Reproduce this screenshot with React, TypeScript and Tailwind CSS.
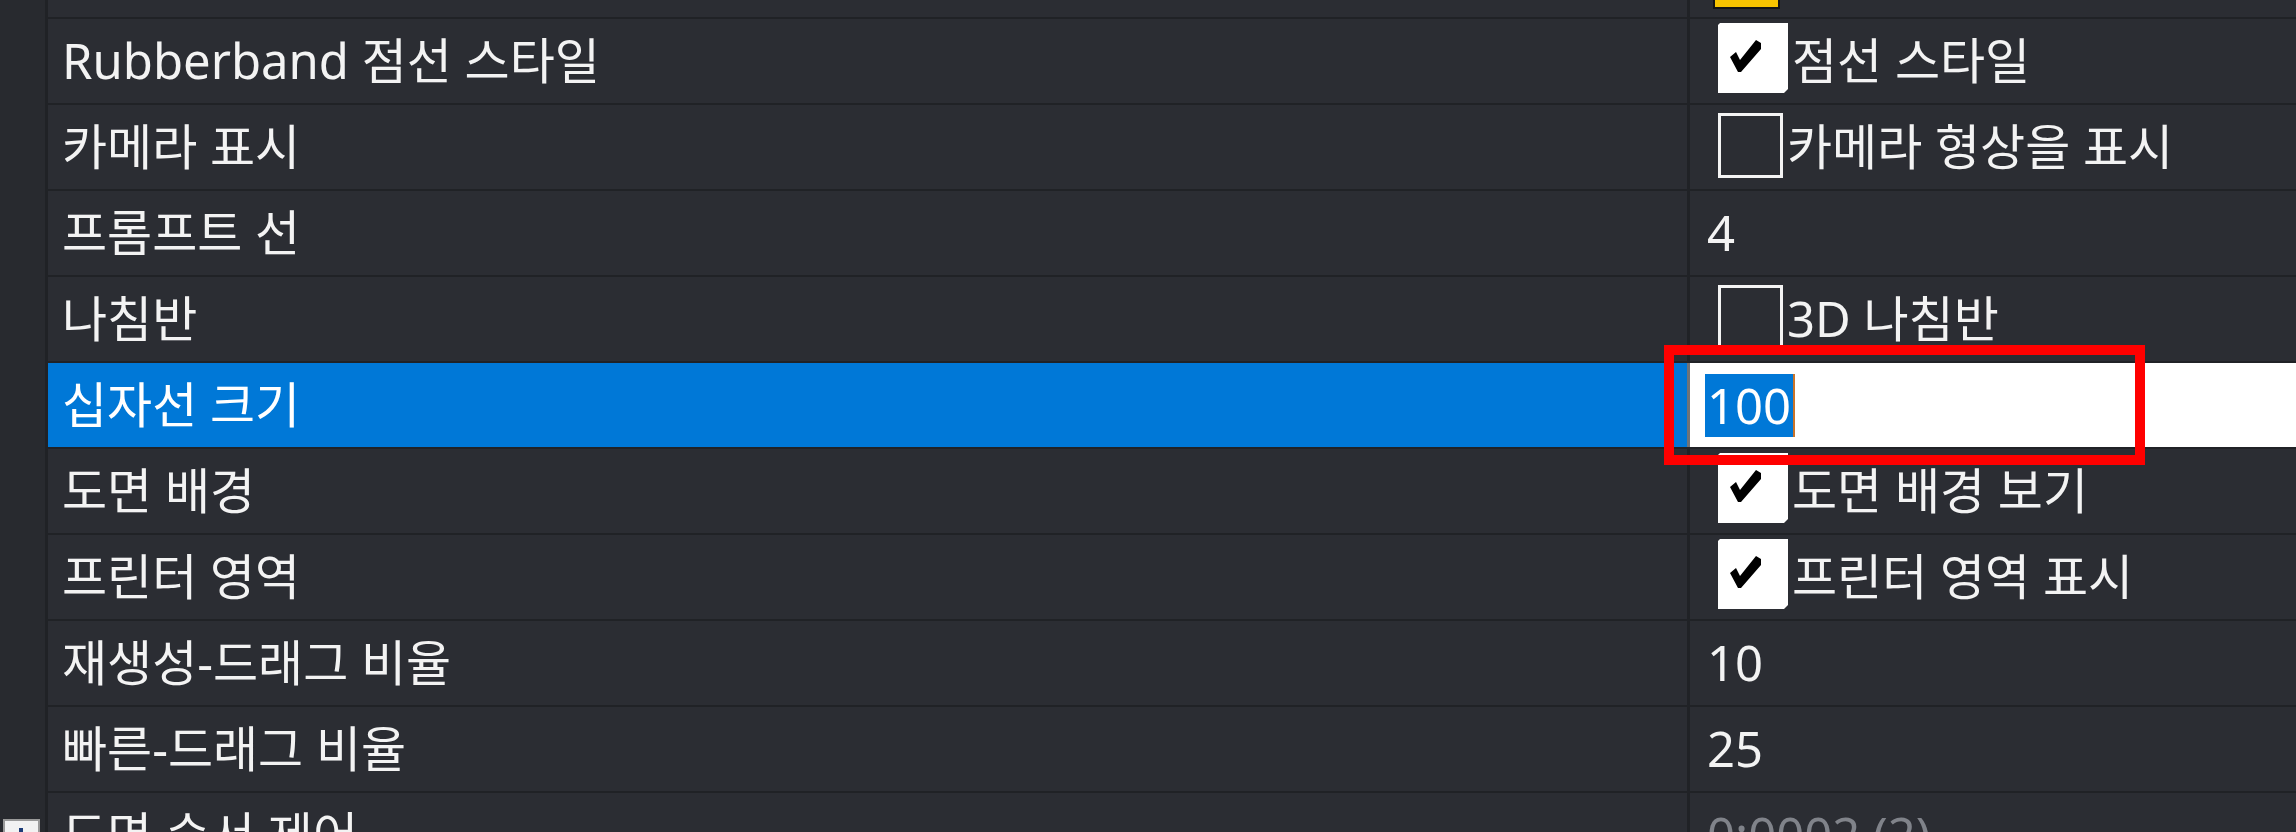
import React from "react";

type Value =
  | { kind: "check"; checked: boolean; label: string }
  | { kind: "text"; text: string; muted?: boolean }
  | { kind: "input"; text: string };

type Row = { name: string; value: Value; selected?: boolean; expander?: boolean };

const rows: Row[] = [
  { name: "Rubberband 점선 스타일", value: { kind: "check", checked: true, label: "점선 스타일" } },
  { name: "카메라 표시", value: { kind: "check", checked: false, label: "카메라 형상을 표시" } },
  { name: "프롬프트 선", value: { kind: "text", text: "4" } },
  { name: "나침반", value: { kind: "check", checked: false, label: "3D 나침반" } },
  { name: "십자선 크기", value: { kind: "input", text: "100" }, selected: true },
  { name: "도면 배경", value: { kind: "check", checked: true, label: "도면 배경 보기" } },
  { name: "프린터 영역", value: { kind: "check", checked: true, label: "프린터 영역 표시" } },
  { name: "재생성-드래그 비율", value: { kind: "text", text: "10" } },
  { name: "빠른-드래그 비율", value: { kind: "text", text: "25" } },
  { name: "도면 순서 제어", value: { kind: "text", text: "0:0002 (2)", muted: true }, expander: true },
];

const CheckBox = ({ checked }: { checked: boolean }) => {
  if (!checked) {
    return <div className="w-[65px] h-[65px] shrink-0 border-[3px] border-[#f4f4f4] bg-[#2b2d33] mb-[3px]" />;
  }
  return (
    <svg width="70" height="70" viewBox="0 0 70 70" className="shrink-0 mb-[6px]">
      <path d="M2 0 H70 V66 L66 70 H0 V2 Z" fill="#ffffff" />
      <path d="M12 34 L18 29 L22 37 L38 17 L43 20 L43 26 L23 49 L20 49 Z" fill="#000000" />
    </svg>
  );
};

const ValueCell = ({ value }: { value: Value }) => {
  if (value.kind === "check") {
    return (
      <div className="flex items-center h-full pl-[28px]">
        <CheckBox checked={value.checked} />
        <span className="ml-[4px] whitespace-nowrap">{value.label}</span>
      </div>
    );
  }
  if (value.kind === "input") {
    return (
      <div className="relative h-full bg-white flex items-center pl-[15px]">
        <span className="bg-[#0078d7] text-white leading-[63px] px-[2px]">{value.text}</span>
        <span className="w-[2px] h-[63px] bg-[#c9742a]" />
        <div className="absolute -left-[26px] -top-[18px] w-[481px] h-[120px] border-[10px] border-[#ff0000] pointer-events-none z-10" />
      </div>
    );
  }
  return (
    <div className={`flex items-center h-full pl-[17px] ${value.muted ? "text-[#80838a]" : ""}`}>
      {value.text}
    </div>
  );
};

export default function App() {
  return (
    <div className="w-[2296px] h-[832px] overflow-hidden bg-[#2b2d33] text-[#f3f3f3] text-[49px] font-['Noto_Sans','Noto_Sans_CJK_KR',sans-serif]">
      {/* partial row at top */}
      <div className="flex h-[19px]">
        <div className="w-[45px] bg-[#282a2f]" />
        <div className="w-[3px] bg-[#202226]" />
        <div className="flex-1 flex border-b-2 border-[#202226]">
          <div className="w-[1639px]" />
          <div className="w-[3px] bg-[#202226]" />
          <div className="flex-1 pl-[23px]">
            <div className="w-[67px] h-[9px] bg-[#f7c300] border-x-2 border-b-2 border-[#141414]" />
          </div>
        </div>
      </div>

      {rows.map((row) => (
        <div key={row.name} className="flex h-[86px]">
          <div className="w-[45px] bg-[#282a2f] flex items-center justify-center pt-[2px]">
            {row.expander && (
              <div className="w-[37px] h-[37px] ml-[-3px] bg-[#f2f2f2] border-2 border-[#9a9a9a] flex items-center justify-center">
                <svg width="22" height="22" viewBox="0 0 22 22">
                  <rect x="9" y="2" width="4" height="18" fill="#1c3c78" />
                  <rect x="2" y="9" width="18" height="4" fill="#1c3c78" />
                </svg>
              </div>
            )}
          </div>
          <div className="w-[3px] bg-[#202226]" />
          <div className="flex-1 flex border-b-2 border-[#202226]">
            <div
              className={`w-[1639px] flex items-center pl-[14px] whitespace-nowrap ${
                row.selected ? "bg-[#0078d7] text-white" : ""
              }`}
            >
              {row.name}
            </div>
            <div className={`w-[3px] ${row.selected ? "bg-[#6f7378]" : "bg-[#202226]"}`} />
            <div className="flex-1">
              <ValueCell value={row.value} />
            </div>
          </div>
        </div>
      ))}
    </div>
  );
}
